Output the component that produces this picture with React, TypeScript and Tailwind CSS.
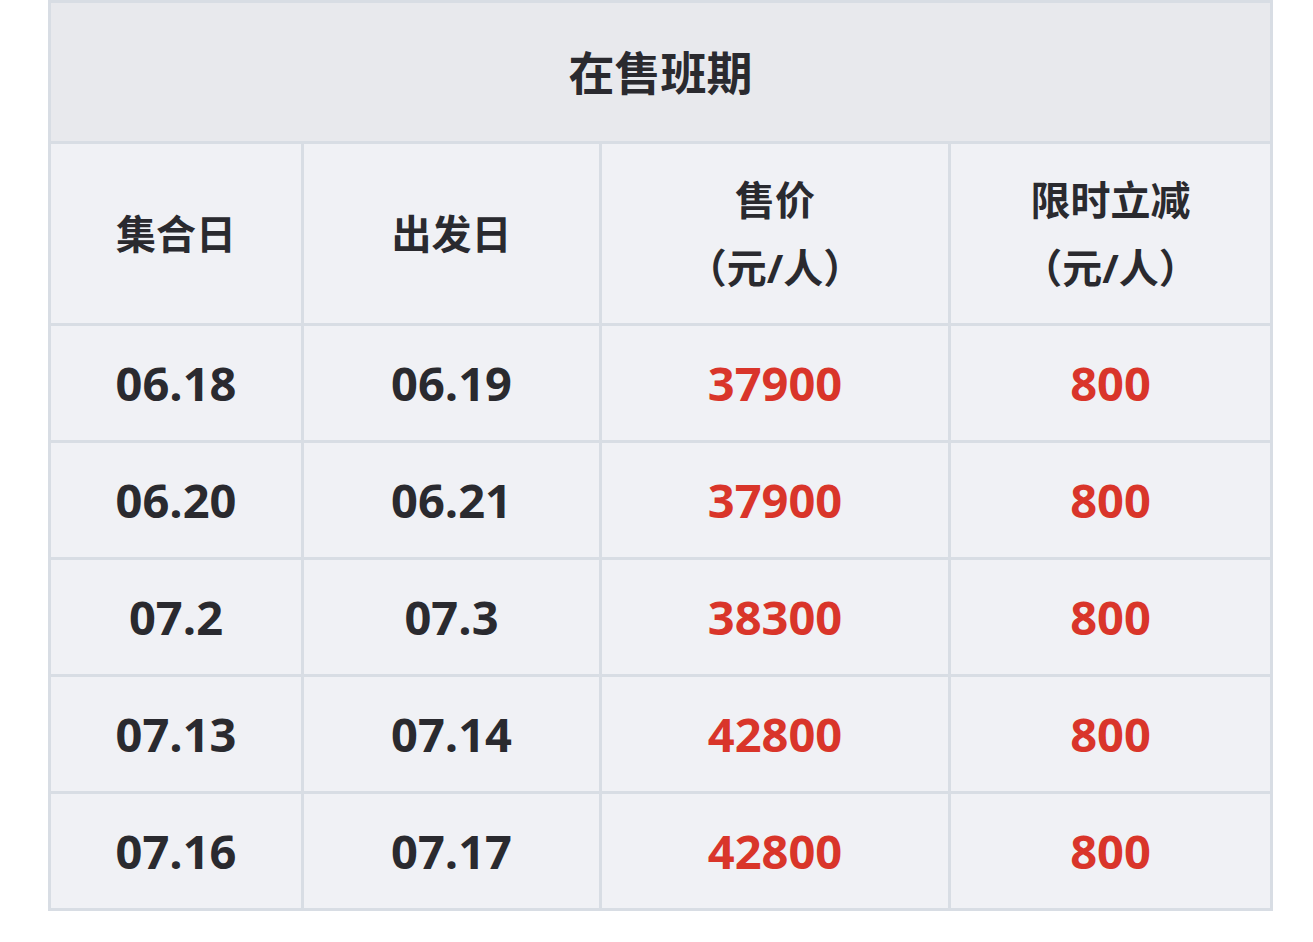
const rows = [
  ['06.18', '06.19', '37900', '800'],
  ['06.20', '06.21', '37900', '800'],
  ['07.2', '07.3', '38300', '800'],
  ['07.13', '07.14', '42800', '800'],
  ['07.16', '07.17', '42800', '800'],
];

export default function App() {
  return (
    <div
      className="w-[1313px] h-[942px] bg-white pl-[48px]"
      style={{ fontFamily: '"Open Sans", "Noto Sans CJK SC", sans-serif' }}
    >
      <table className="w-[1222px] border-collapse table-fixed text-[#2a2a2f]">
        <colgroup>
          <col className="w-[253px]" />
          <col className="w-[298px]" />
          <col className="w-[349px]" />
          <col className="w-[322px]" />
        </colgroup>
        <thead>
          <tr className="h-[141px]">
            <th
              colSpan={4}
              className="bg-[#e8e9ed] border-[3px] border-[#d8dde4] text-[46px] font-bold"
            >
              在售班期
            </th>
          </tr>
          <tr className="h-[182px] bg-[#f0f1f5]">
            <th className="border-[3px] border-[#d8dde4] text-[40px] font-bold">集合日</th>
            <th className="border-[3px] border-[#d8dde4] text-[40px] font-bold">出发日</th>
            <th className="border-[3px] border-[#d8dde4] text-[40px] font-bold leading-[68px]">
              售价
              <br />
              （元/人）
            </th>
            <th className="border-[3px] border-[#d8dde4] text-[40px] font-bold leading-[68px]">
              限时立减
              <br />
              （元/人）
            </th>
          </tr>
        </thead>
        <tbody>
          {rows.map((r, i) => (
            <tr key={i} className="h-[117px] bg-[#f0f1f5] text-[47px] font-bold text-center">
              <td className="border-[3px] border-[#d8dde4]">{r[0]}</td>
              <td className="border-[3px] border-[#d8dde4]">{r[1]}</td>
              <td className="border-[3px] border-[#d8dde4] text-[#d9352a]">{r[2]}</td>
              <td className="border-[3px] border-[#d8dde4] text-[#d9352a]">{r[3]}</td>
            </tr>
          ))}
        </tbody>
      </table>
    </div>
  );
}
